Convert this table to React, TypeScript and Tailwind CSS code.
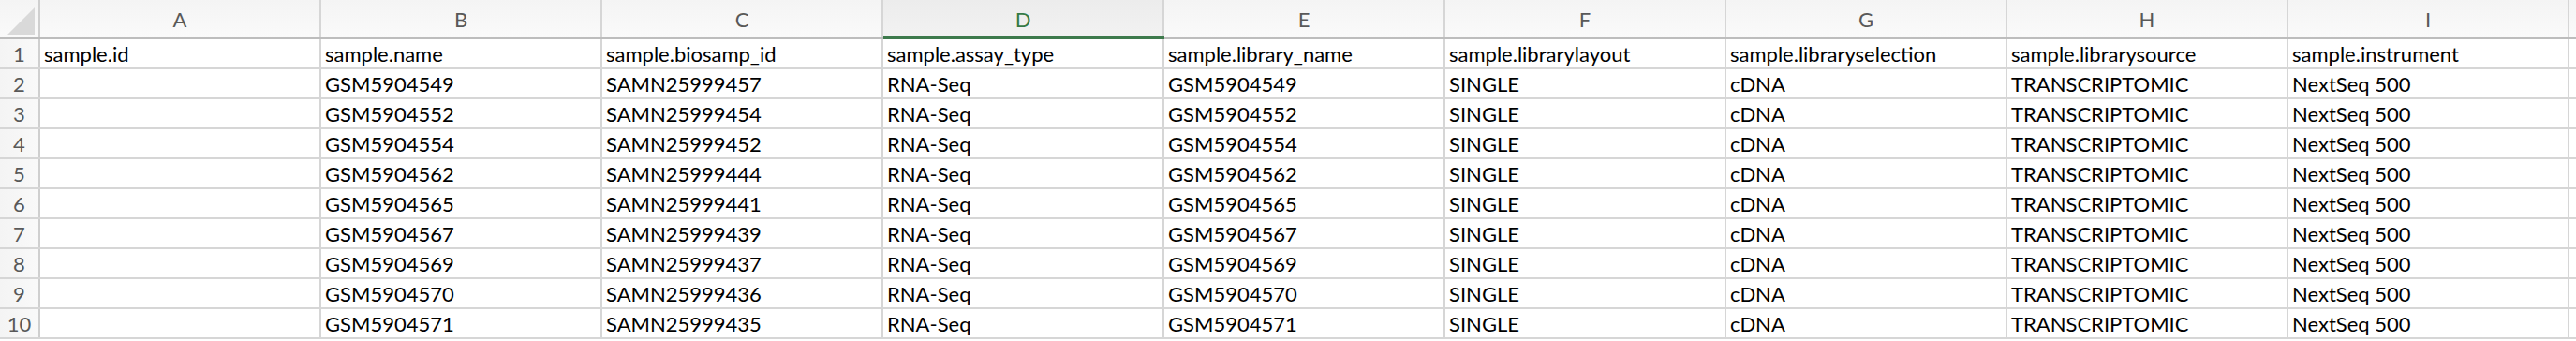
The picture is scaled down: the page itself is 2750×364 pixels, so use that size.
const columns = ["A", "B", "C", "D", "E", "F", "G", "H", "I"];

const headers = [
  "sample.id",
  "sample.name",
  "sample.biosamp_id",
  "sample.assay_type",
  "sample.library_name",
  "sample.librarylayout",
  "sample.libraryselection",
  "sample.librarysource",
  "sample.instrument",
];

const ids: [string, string][] = [
  ["GSM5904549", "SAMN25999457"],
  ["GSM5904552", "SAMN25999454"],
  ["GSM5904554", "SAMN25999452"],
  ["GSM5904562", "SAMN25999444"],
  ["GSM5904565", "SAMN25999441"],
  ["GSM5904567", "SAMN25999439"],
  ["GSM5904569", "SAMN25999437"],
  ["GSM5904570", "SAMN25999436"],
  ["GSM5904571", "SAMN25999435"],
];

const rows: string[][] = [
  headers,
  ...ids.map(([gsm, samn]) => [
    "",
    gsm,
    samn,
    "RNA-Seq",
    gsm,
    "SINGLE",
    "cDNA",
    "TRANSCRIPTOMIC",
    "NextSeq 500",
  ]),
];

function Corner() {
  return (
    <div className="flex h-full w-[43px] shrink-0 border-r-2 border-[#cfcfcf] bg-gradient-to-b from-[#f4f4f4] to-[#fafafa]">
      <svg width="41" height="40" viewBox="0 0 41 40">
        <polygon points="8,37 37,8 37,37" fill="#d9d9d9" />
      </svg>
    </div>
  );
}

export default function App() {
  return (
    <div className="h-[364px] w-[2750px] overflow-hidden bg-white font-['Lato',sans-serif]">
      {/* column letters */}
      <div className="flex h-[42px] border-b-2 border-[#bdbdbd]">
        <Corner />
        {columns.map((c) => {
          const active = c === "D";
          return (
            <div
              key={c}
              className={
                active
                  ? "relative flex w-[300px] shrink-0 items-center justify-center border-r-2 border-[#d6d6d6] bg-gradient-to-b from-[#ececec] to-[#f2f2f2] text-[22px] text-[#357a46]"
                  : "flex w-[300px] shrink-0 items-center justify-center border-r-2 border-[#d6d6d6] bg-gradient-to-b from-[#f4f4f4] to-[#fafafa] text-[22px] text-[#595959]"
              }
            >
              {c}
              {active && (
                <div className="absolute -bottom-[2px] left-0 right-[-2px] h-[4px] bg-[#3d7a4c]" />
              )}
            </div>
          );
        })}
        <div className="w-[300px] shrink-0 bg-gradient-to-b from-[#f4f4f4] to-[#fafafa]" />
      </div>

      {rows.map((cells, i) => (
        <div key={i} className="flex h-[32px] border-b-2 border-[#d6d6d6]">
          <div className="flex w-[43px] shrink-0 items-center justify-center border-r-2 border-[#cfcfcf] bg-gradient-to-r from-[#f4f4f4] to-[#f9f9f9] text-[22px] text-[#595959]">
            {i + 1}
          </div>
          {cells.map((v, j) => (
            <div
              key={j}
              className="flex w-[300px] shrink-0 items-center whitespace-nowrap border-r-2 border-[#d6d6d6] pl-[4px] text-[22px] text-black"
            >
              {v}
            </div>
          ))}
          <div className="w-[300px] shrink-0" />
        </div>
      ))}
    </div>
  );
}
